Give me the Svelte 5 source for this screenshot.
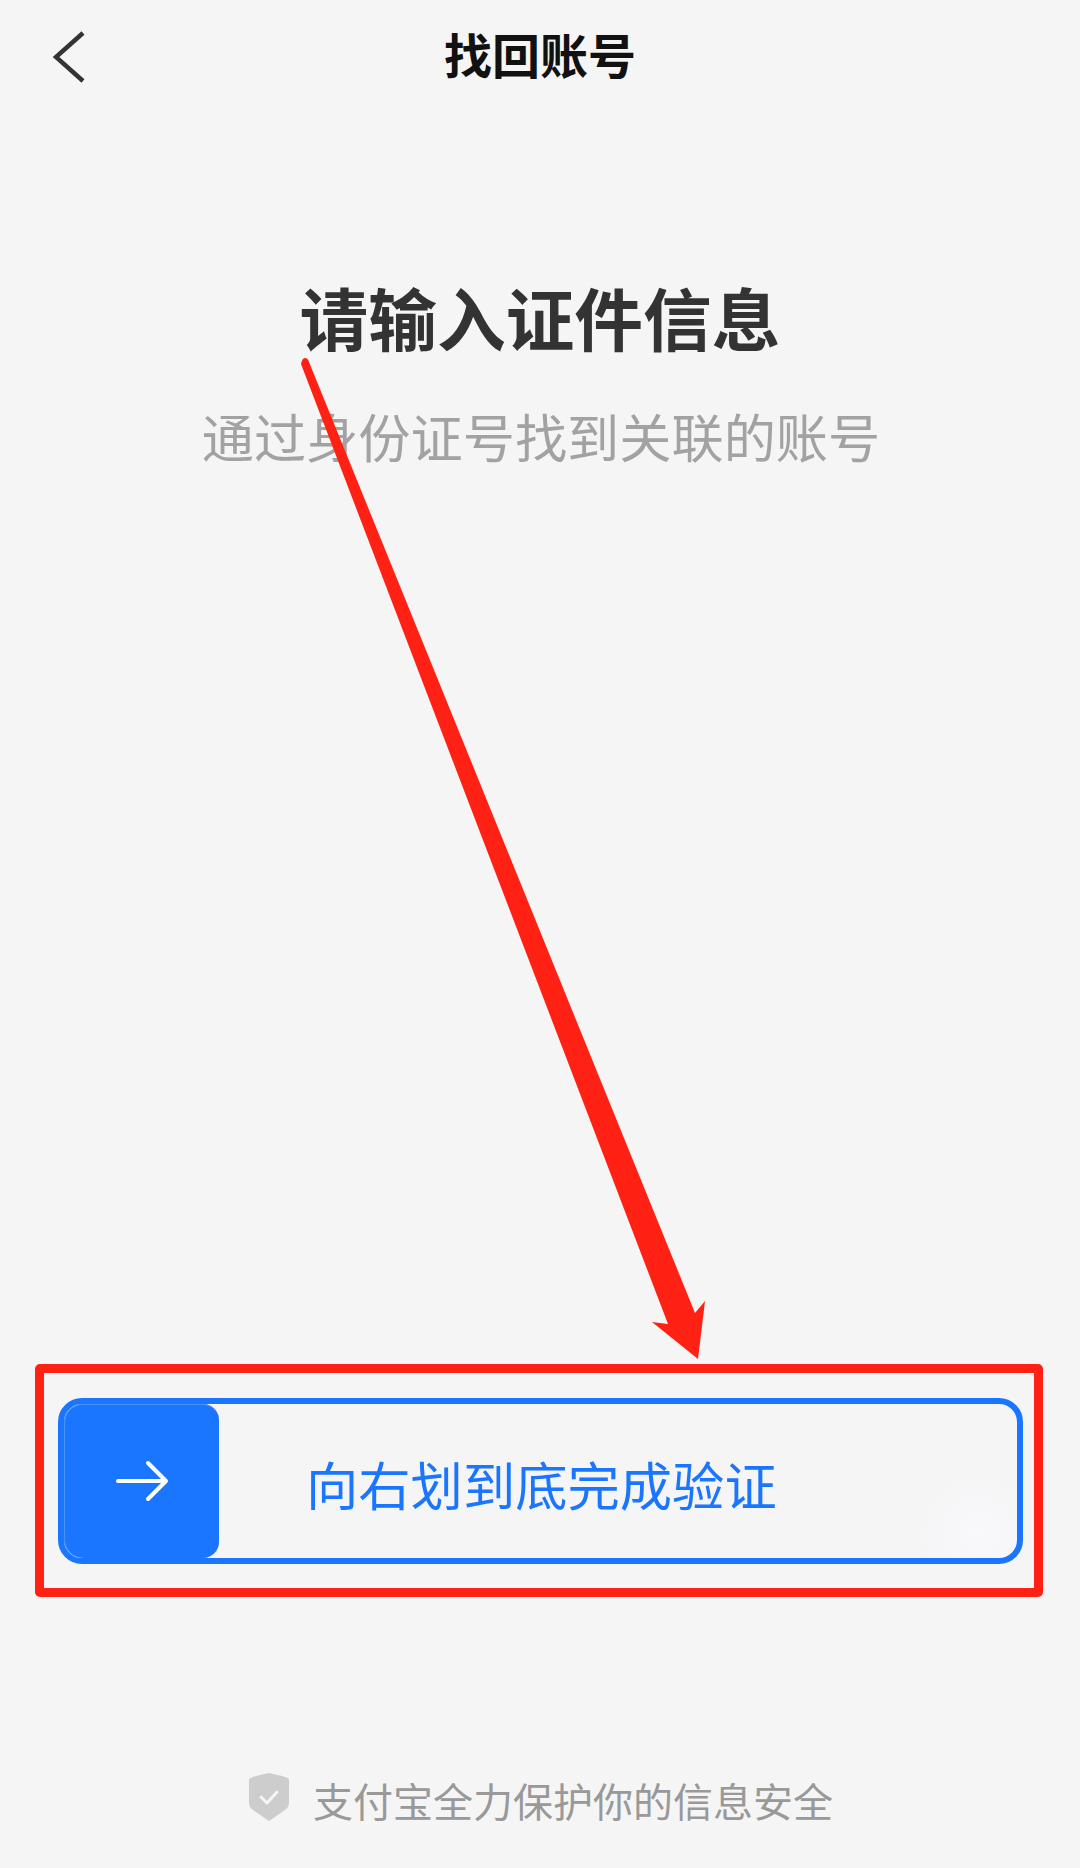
<script>
  const title = '找回账号';
</script>

<div class="page">
  <header class="nav">
    <button class="back" aria-label="返回">
      <svg width="40" height="60" viewBox="0 0 40 60"><path d="M33 4 L6 28 L33 52" fill="none" stroke="#333" stroke-width="4.4"/></svg>
    </button>
    <h2>{title}</h2>
  </header>

  <section class="intro">
    <h1>请输入证件信息</h1>
    <p>通过身份证号找到关联的账号</p>
  </section>

  <div class="mark">
    <div class="track">
      <div class="thumb">
        <svg width="54" height="42" viewBox="0 0 54 42"><path d="M3 21 H50 M33 3 L51 21 L33 39" fill="none" stroke="#fff" stroke-width="4" stroke-linecap="round" stroke-linejoin="round"/></svg>
      </div>
      <span class="hint">向右划到底完成验证</span>
    </div>
  </div>

  <footer class="foot">
    <svg width="40" height="48" viewBox="0 0 40 48"><path d="M20 0 L33 3 Q37 4 40 6 V30 Q40 34 36 37 L20 48 L4 37 Q0 34 0 30 V6 Q3 4 7 3 Z" fill="#cdcdcd"/><path d="M12 24 L18 30 L28 19" fill="none" stroke="#f5f5f5" stroke-width="3" stroke-linecap="round" stroke-linejoin="round"/></svg>
    <span>支付宝全力保护你的信息安全</span>
  </footer>

  <svg class="pointer" width="1080" height="1868" viewBox="0 0 1080 1868">
    <path d="M301 364 Q302 358 305 358 Q308 358 309 362 L695 1313 L705 1301 L698 1359 L652 1322 L668 1324 Z" fill="#ff2114"/>
  </svg>
</div>

<style>
  :global(body) {
    margin: 0;
    background: #f5f5f5;
  }
  .page {
    position: relative;
    width: 1080px;
    height: 1868px;
    box-sizing: border-box;
    overflow: hidden;
    display: flex;
    flex-direction: column;
    background: #f5f5f5;
    font-family: "Noto Sans CJK SC", "Noto Sans", sans-serif;
  }
  .nav {
    display: flex;
    align-items: center;
    justify-content: center;
    position: relative;
    height: 106px;
  }
  .nav h2 {
    margin: 0;
    font-size: 48px;
    font-weight: 700;
    line-height: 1;
    color: #111;
  }
  .back {
    position: absolute;
    left: 50px;
    top: 29px;
    padding: 0;
    border: 0;
    background: none;
    line-height: 0;
  }
  .intro {
    display: flex;
    flex-direction: column;
    align-items: center;
    padding-top: 176px;
  }
  .intro h1 {
    margin: 0;
    font-size: 68.7px;
    font-weight: 700;
    line-height: 68px;
    color: #333;
  }
  .intro p {
    margin: 59px 0 0;
    padding-left: 2px;
    font-size: 52.2px;
    font-weight: 400;
    line-height: 52px;
    color: #a2a2a2;
  }
  .mark {
    box-sizing: border-box;
    width: 1008px;
    height: 233px;
    margin: 903px 0 0 35px;
    padding: 25px 11px 24px 14px;
    border: 9.5px solid #ff2114;
    border-radius: 5px;
  }
  .track {
    box-sizing: border-box;
    height: 100%;
    display: flex;
    align-items: center;
    border: 6px solid #1a76ff;
    border-radius: 24px;
    background: radial-gradient(circle at 96% 84%, #f9f9fb 0, #f7f7f9 28px, #f5f5f6 64px);
  }
  .thumb {
    flex: none;
    width: 155px;
    height: 100%;
    display: flex;
    align-items: center;
    justify-content: center;
    border-radius: 19px 16px 16px 19px;
    background: #1a76ff;
    box-shadow: inset 1px 0 0 #4a90ff, inset 0 1px 0 #4a90ff;
  }
  .hint {
    margin-left: 87px;
    font-size: 52.3px;
    line-height: 52px;
    color: #1a76ff;
    position: relative;
    top: 2px;
  }
  .foot {
    display: flex;
    align-items: center;
    margin: 176px 0 0 249px;
    gap: 24px;
    height: 48px;
  }
  .foot span {
    font-size: 40px;
    line-height: 40px;
    color: #999;
    position: relative;
    top: 3px;
  }
  .pointer {
    position: absolute;
    inset: 0;
    pointer-events: none;
  }
</style>
